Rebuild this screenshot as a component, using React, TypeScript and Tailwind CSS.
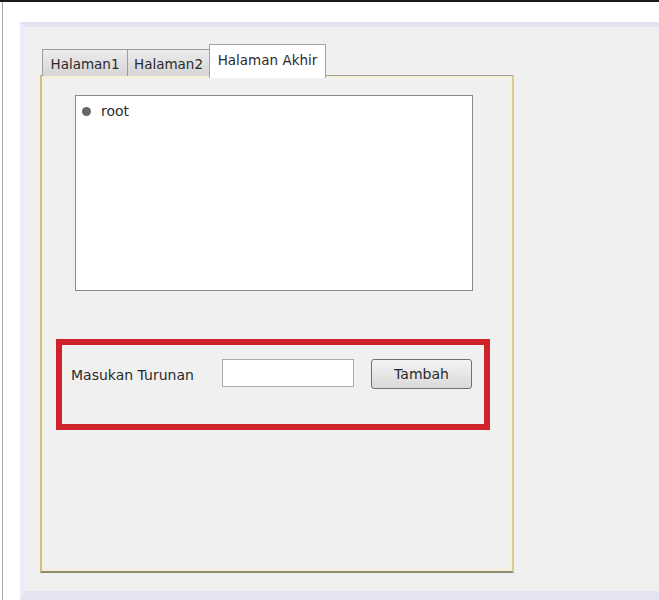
export default function App() {
  return (
    <div
      className="flex h-[600px] w-[659px] flex-col overflow-hidden border-t-2 border-[#1a1a1a] bg-white pl-[2px] text-[14px] text-[#2b2b2b]"
      style={{ fontFamily: '"DejaVu Sans", Verdana, sans-serif' }}
    >
      <div className="flex flex-1 flex-col border-l border-[#a9a9a9] pl-[17px] pt-[20px]">
        <div className="flex flex-1 flex-col border-b-[9px] border-l-[5px] border-t-[5px] border-b-[#e4e4f2] border-l-[#ececf8] border-t-[#e2e2f1] bg-[#f0f0f0] pl-[15px] pt-[17px]">
          {/* tabs */}
          <div className="relative z-10 ml-[2px] flex h-[32px] items-end">
            <div className="flex h-[27px] w-[86px] items-center justify-center border border-b-0 border-[#9c9c9c] bg-gradient-to-b from-[#ececec] to-[#d5d5d5] pt-[2px] text-[13.5px]">
              Halaman1
            </div>
            <div className="-ml-px flex h-[27px] w-[83px] items-center justify-center border border-b-0 border-[#9c9c9c] bg-gradient-to-b from-[#ececec] to-[#d5d5d5] pt-[2px] text-[13.5px]">
              Halaman2
            </div>
            <div className="-mb-[2px] -ml-px flex h-[34px] w-[117px] items-start justify-center border border-b-0 border-[#a3a3a3] bg-white pt-[5px] text-[13.5px]">
              Halaman Akhir
            </div>
          </div>

          {/* panel */}
          <div className="-mt-px flex h-[498px] w-[474px] flex-col border-b-2 border-l-2 border-r-2 border-t border-b-[#8e8a70] border-l-[#d2bd82] border-r-[#dccb98] border-t-[#9f9f9f] pl-[14px] pt-[19px] shadow-[inset_0_0_0_2px_#f7efd7]">
            <div className="ml-[19px] flex h-[196px] w-[398px] items-start border border-[#8a8a8a] bg-white pl-[6px] pt-[5px]">
              <div className="flex items-center gap-[10px]">
                <span className="block h-[9px] w-[9px] rounded-full bg-[#666666]" />
                <span>root</span>
              </div>
            </div>

            <div className="mt-[48px] flex h-[91px] w-[434px] items-start border-[6px] border-[#d0222b] pl-[9px] pt-[14px]">
              <span className="mt-[6px] w-[151px]">Masukan Turunan</span>
              <input
                type="text"
                className="h-[28px] w-[132px] border border-[#a9abb2] bg-white outline-none"
              />
              <button className="ml-[17px] flex h-[30px] w-[101px] items-center justify-center rounded-[3px] border border-[#707070] bg-gradient-to-b from-[#f4f4f4] to-[#d9d9d9] text-[14px] text-[#2b2b2b]">
                Tambah
              </button>
            </div>
          </div>
        </div>
      </div>
    </div>
  );
}
